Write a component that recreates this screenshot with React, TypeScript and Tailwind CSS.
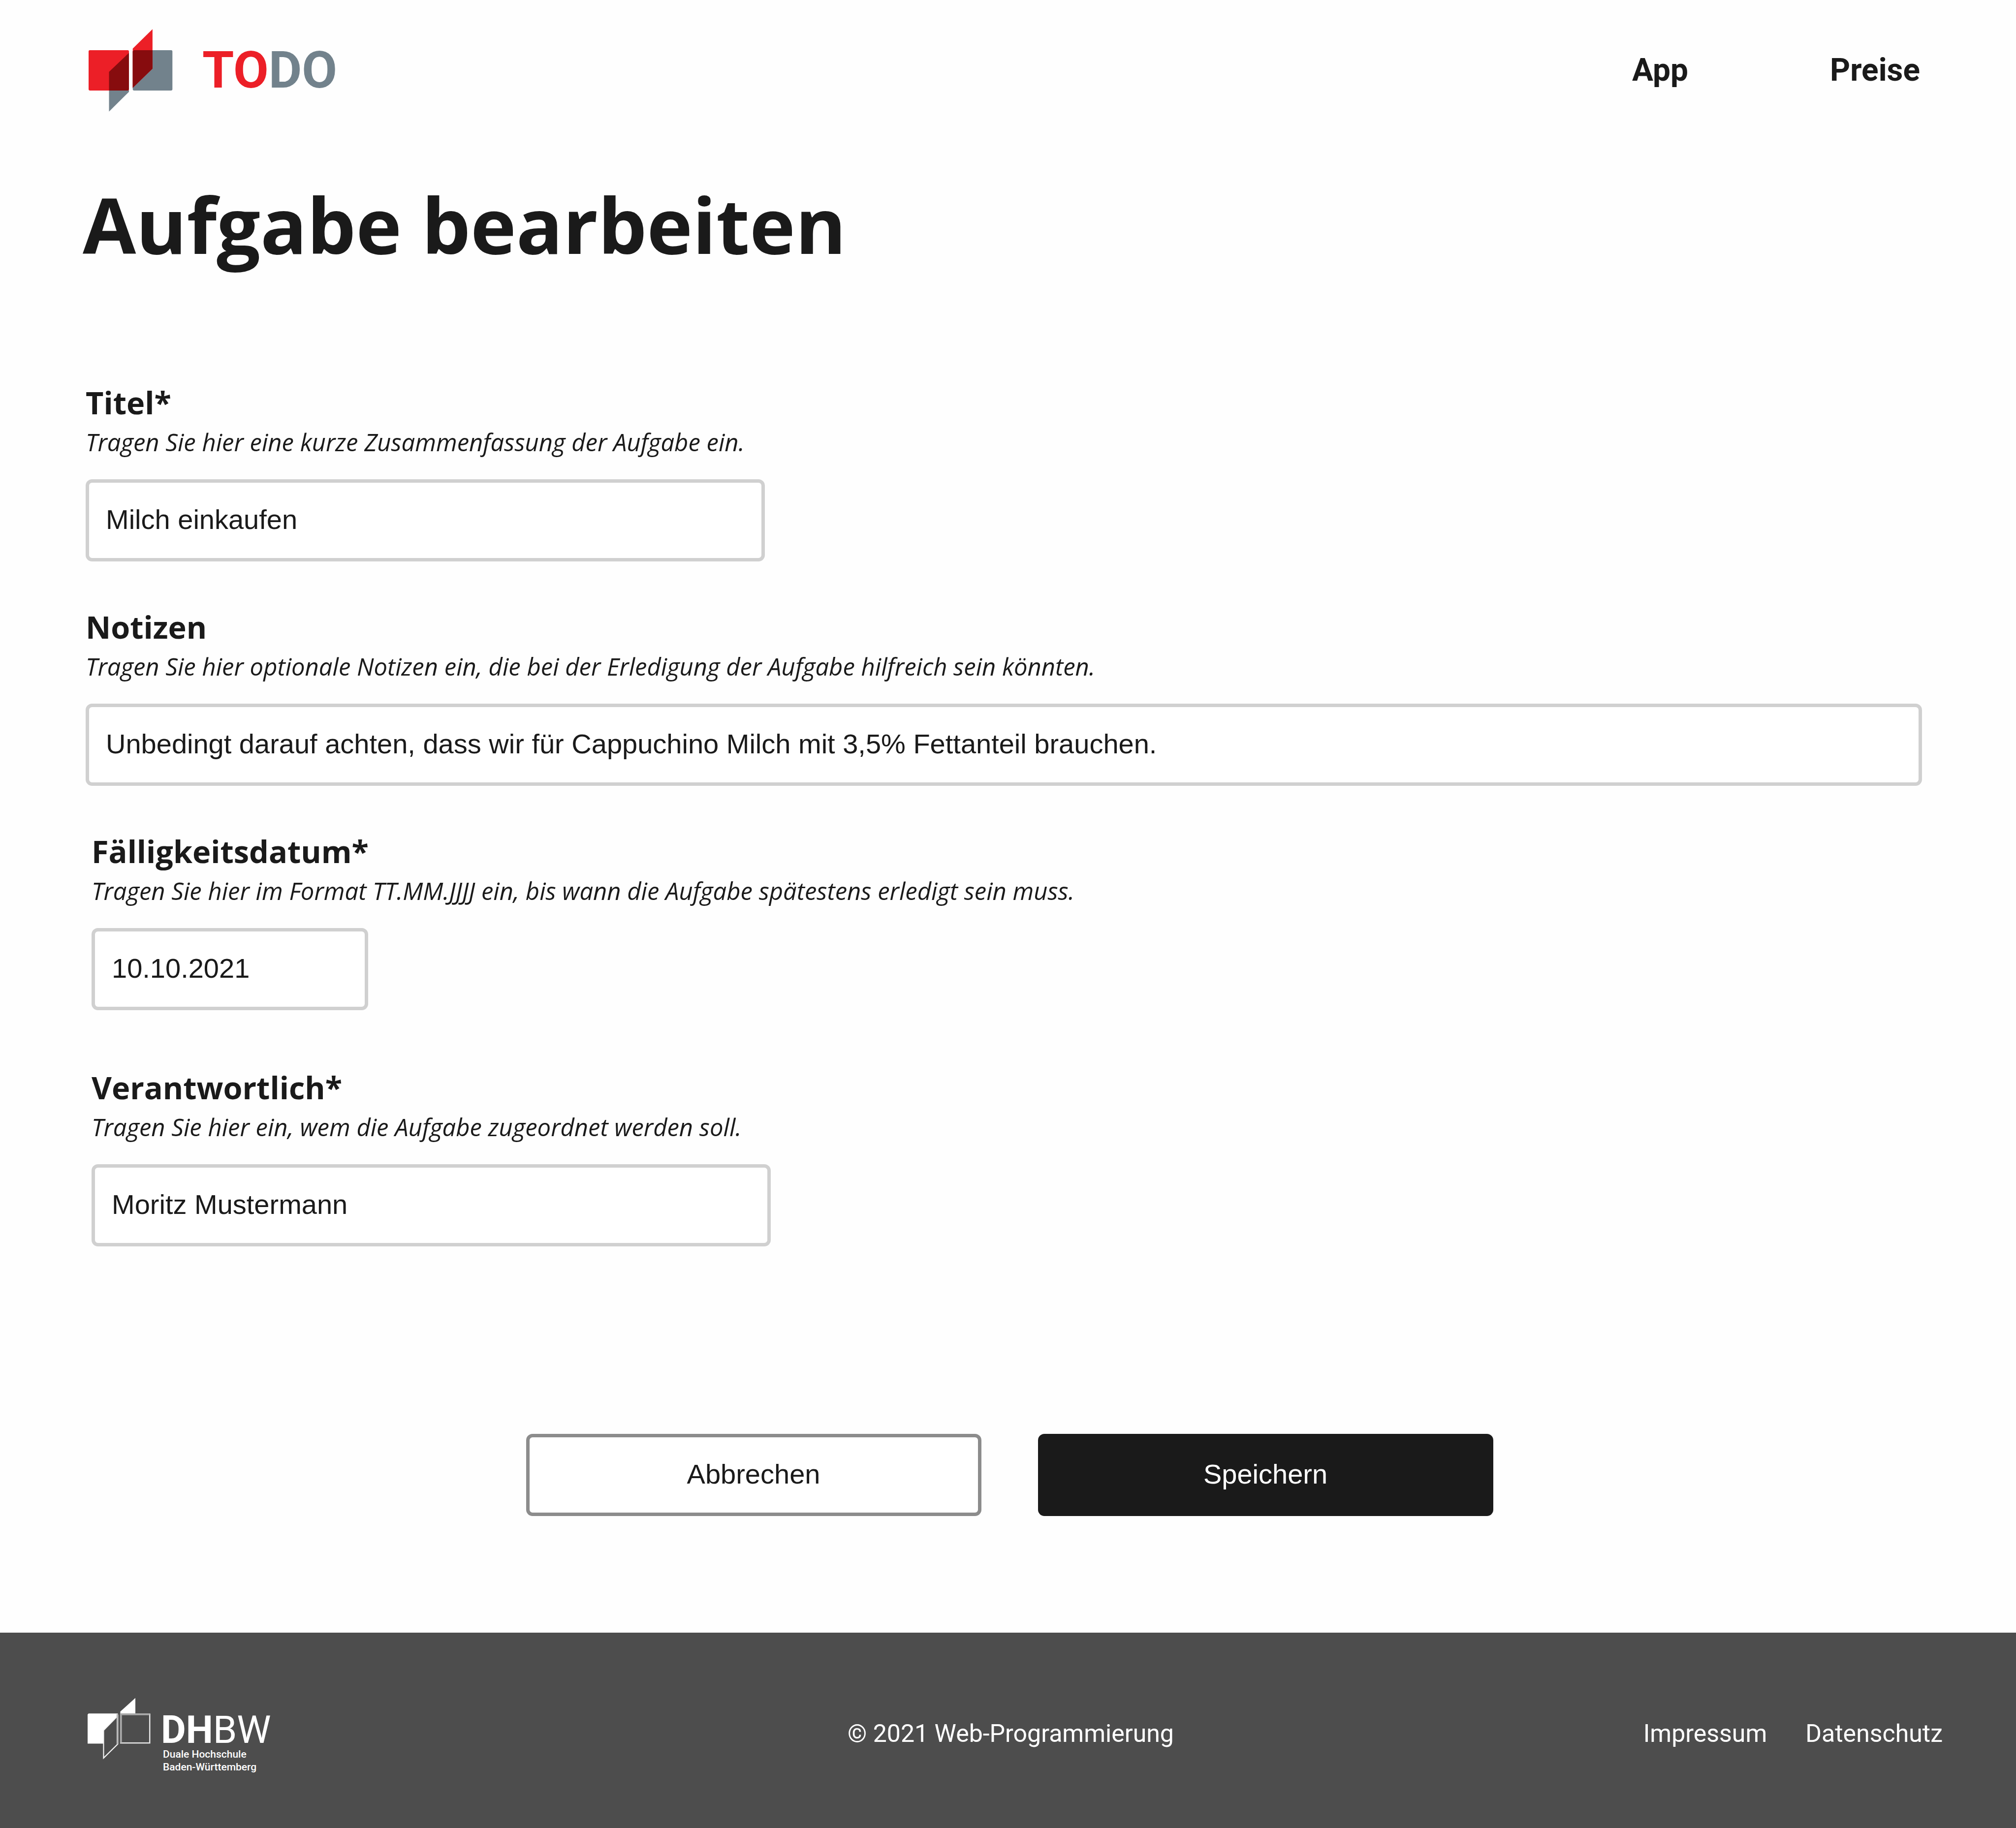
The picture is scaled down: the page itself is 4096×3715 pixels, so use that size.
import React from "react";

type FieldProps = {
  id: string;
  label: string;
  hint: string;
  value: string;
  widthClass: string;
  className?: string;
};

function Field({ id, label, hint, value, widthClass, className = "" }: FieldProps) {
  return (
    <div className={`flex flex-col ${className}`}>
      <label htmlFor={id} className="text-[63px] leading-[80px] font-bold">
        {label}
      </label>
      <p id={`${id}-hint`} className="text-[49px] leading-[80px] italic">
        {hint}
      </p>
      <input
        id={id}
        type="text"
        defaultValue={value}
        aria-describedby={`${id}-hint`}
        className={`mt-9 h-[167px] rounded-[13px] border-[7px] border-[#d0d0d0] bg-white px-[34px] pb-1 font-['Liberation_Sans',Arial,sans-serif] text-[56px] outline-none ${widthClass}`}
      />
    </div>
  );
}

function TodoMark() {
  return (
    <svg viewBox="184 60 176 174" className="h-[170px] w-[172px]" aria-hidden="true">
      <rect x="276.8" y="105" width="82.5" height="84" rx="2.5" fill="#72828c" />
      <path d="M227.5 150 L268.9 110.7 V191.7 L227.5 232.6 Z" fill="#72828c" />
      <rect x="185" y="105" width="83.9" height="84" rx="2.5" fill="#ec1f27" />
      <path d="M276.8 101.7 L317.9 61.3 V143.3 L276.8 183.3 Z" fill="#ec1f27" />
      <path d="M227.5 150 L268.9 110.7 V186.5 L266.4 189 H227.5 Z" fill="#870c0e" />
      <path d="M276.8 107.5 L279.3 105 H317.9 V143.3 L276.8 183.3 Z" fill="#870c0e" />
    </svg>
  );
}

function DhbwMark() {
  return (
    <svg viewBox="182 3537 133 129" className="h-[126px] w-[130px]" aria-hidden="true">
      <path d="M185 3570 H246 V3574 L217 3604 V3632.7 H183 V3572 Z" fill="#fff" />
      <path d="M216.2 3605 L245.8 3575 V3633.5 L216.2 3662.8 Z" fill="#4d4d4d" stroke="#f5f5f5" strokeWidth="2.2" />
      <path d="M244.8 3571 V3634" stroke="#b8b8b8" strokeWidth="3.2" />
      <path d="M251 3566 L282.3 3537.7 V3571 H251 Z" fill="#fff" />
      <rect x="251.8" y="3571.4" width="60.4" height="60" fill="#4d4d4d" stroke="#e4e4e4" strokeWidth="2.6" />
      <path d="M252.4 3631 V3571.6 H312" fill="none" stroke="#aaa" strokeWidth="3.8" />
    </svg>
  );
}

export default function App() {
  return (
    <div className="flex min-h-screen flex-col bg-[#fefefe] font-['Open_Sans','Noto_Sans',sans-serif] text-[#1a1a1a]">
      <header className="flex items-center justify-between py-[58px] pr-[195px] pl-[179px] font-[Roboto,sans-serif] font-bold">
        <a href="#" className="flex items-center gap-[60px]">
          <TodoMark />
          <span className="text-[104px] leading-[120px] text-[#ec1f27]">
            TO<span className="text-[#72828c]">DO</span>
          </span>
        </a>
        <nav className="flex gap-[288px] text-[64px] leading-[80px]">
          <a href="#app">App</a>
          <a href="#preise">Preise</a>
        </nav>
      </header>

      <main className="flex grow flex-col">
        <h1 className="mt-[69px] pl-[168px] text-[157px] leading-[200px] font-bold">Aufgabe bearbeiten</h1>

        <form className="mt-[223px] flex flex-col" onSubmit={(e) => e.preventDefault()}>
          <div className="flex flex-col gap-[93px] pr-[191px] pl-[174px]">
            <Field
              id="titel"
              label="Titel*"
              hint="Tragen Sie hier eine kurze Zusammenfassung der Aufgabe ein."
              value="Milch einkaufen"
              widthClass="w-[1380px]"
            />
            <Field
              id="notizen"
              label="Notizen"
              hint="Tragen Sie hier optionale Notizen ein, die bei der Erledigung der Aufgabe hilfreich sein könnten."
              value="Unbedingt darauf achten, dass wir für Cappuchino Milch mit 3,5% Fettanteil brauchen."
              widthClass="w-full"
            />
            <Field
              id="datum"
              label="Fälligkeitsdatum*"
              hint="Tragen Sie hier im Format TT.MM.JJJJ ein, bis wann die Aufgabe spätestens erledigt sein muss."
              value="10.10.2021"
              widthClass="w-[562px]"
              className="ml-3"
            />
            <Field
              id="verantwortlich"
              label="Verantwortlich*"
              hint="Tragen Sie hier ein, wem die Aufgabe zugeordnet werden soll."
              value="Moritz Mustermann"
              widthClass="w-[1380px]"
              className="mt-6 ml-3"
            />
          </div>

          <div className="mt-[381px] mb-[237px] flex justify-center gap-[115px] pr-[180px] pl-[186px] font-['Liberation_Sans',Arial,sans-serif] text-[56px]">
            <button
              type="button"
              className="h-[167px] w-[925px] rounded-[13px] border-[7px] border-[#8c8c8c] bg-white pb-1"
            >
              Abbrechen
            </button>
            <button type="submit" className="h-[167px] w-[925px] rounded-[13px] bg-[#1a1a1a] pb-1 text-white">
              Speichern
            </button>
          </div>
        </form>
      </main>

      <footer className="grid grid-cols-[1fr_auto_1fr] items-center bg-[#4d4d4d] pt-[132px] pr-[149px] pb-[111px] pl-[160px] font-[Roboto,sans-serif] text-[50px] leading-[60px] text-white">
        <a href="#dhbw" className="flex items-start gap-[20px] pl-[17px]">
          <DhbwMark />
          <span className="flex flex-col pt-[30px]">
            <span className="text-[78px] leading-[72px]">
              <span className="font-bold">DH</span>BW
            </span>
            <span className="pl-[4px] text-[21px] leading-[26px] font-medium">
              Duale Hochschule
              <br />
              Baden-Württemberg
            </span>
          </span>
        </a>
        <p className="pb-2">© 2021 Web-Programmierung</p>
        <nav className="flex justify-end gap-[78px] pb-2">
          <a href="#impressum">Impressum</a>
          <a href="#datenschutz">Datenschutz</a>
        </nav>
      </footer>
    </div>
  );
}
